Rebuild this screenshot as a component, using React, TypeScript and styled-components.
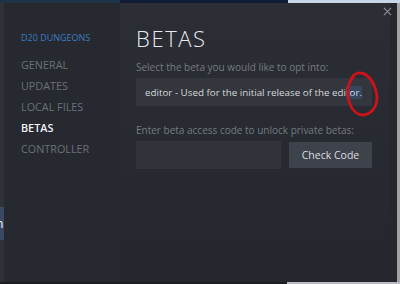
import styled, { createGlobalStyle } from 'styled-components';

const GlobalStyle = createGlobalStyle`
  html, body {
    margin: 0;
    padding: 0;
    width: 400px;
    height: 284px;
    overflow: hidden;
    background: #3a3e47;
  }
  * { box-sizing: border-box; }
`;

const navItems = ['GENERAL', 'UPDATES', 'LOCAL FILES', 'BETAS', 'CONTROLLER'];

export default function App() {
  return (
    <>
      <GlobalStyle />
      <Screen>
        <EdgeStrip $height={3}>
          <StripPart $color="#1d3547" $width={120} />
          <StripPart $color="#0f1c33" $width={168} />
          <StripPart $color="#c9d6ea" $width={112} />
        </EdgeStrip>
        <Body>
          <BehindEdge>
            <BehindButton>n</BehindButton>
          </BehindEdge>
          <Dialog>
            <Sidebar>
              <GameTitle>D20 DUNGEONS</GameTitle>
              <NavList>
                {navItems.map((item) => (
                  <NavItem key={item} $active={item === 'BETAS'}>
                    {item}
                  </NavItem>
                ))}
              </NavList>
            </Sidebar>
            <Main>
              <CloseButton>
                <svg width="9" height="9" viewBox="0 0 10 10">
                  <path d="M1 1L9 9M9 1L1 9" stroke="#8a8e96" strokeWidth="1.3" />
                </svg>
              </CloseButton>
              <Title>BETAS</Title>
              <Label $top={8}>Select the beta you would like to opt into:</Label>
              <SelectBox>
                <SelectText>
                  editor - Used for the initial release of the edi<Selected>tor.</Selected>
                </SelectText>
                {/* red hand-drawn circle from the screenshot */}
                <Scribble width="40" height="50" viewBox="0 0 40 50">
                  <path
                    d="M8 13 C10 6 15 3 19 4 C27 5 34 16 35 28 C35 38 30 45 21 46 C13 46 8 38 6 28 C5 20 7 12 12 7"
                    fill="none"
                    stroke="#cc121b"
                    strokeWidth="2.8"
                    strokeLinecap="round"
                  />
                </Scribble>
              </SelectBox>
              <Label $top={17}>Enter beta access code to unlock private betas:</Label>
              <CodeRow>
                <CodeInput />
                <CheckButton>Check Code</CheckButton>
              </CodeRow>
            </Main>
            <ScrollGutter />
            <RightEdge />
          </Dialog>
        </Body>
        <EdgeStrip $height={2}>
          <StripPart $color="#1b1d21" $width={287} />
          <StripPart $color="#b8bcc2" $width={113} />
        </EdgeStrip>
      </Screen>
    </>
  );
}

const Screen = styled.div`
  width: 400px;
  height: 284px;
  display: flex;
  flex-direction: column;
  font-family: "Open Sans", "Noto Sans", sans-serif;
`;

const EdgeStrip = styled.div<{ $height: number }>`
  height: ${({ $height }) => $height}px;
  flex-shrink: 0;
  display: flex;
`;

const StripPart = styled.div<{ $color: string; $width: number }>`
  width: ${({ $width }) => $width}px;
  flex-shrink: 0;
  background: ${({ $color }) => $color};
`;

const Body = styled.div`
  flex: 1;
  display: flex;
  min-height: 0;
`;

const BehindEdge = styled.div`
  width: 4px;
  flex-shrink: 0;
  background: #2e3138;
  padding-top: 204px;
  overflow: hidden;
`;

const BehindButton = styled.div`
  height: 33px;
  width: 4px;
  background: #3b4863;
  color: #ffffff;
  font-size: 12px;
  line-height: 33px;
  text-indent: -4px;
  overflow: hidden;
`;

const Dialog = styled.div`
  flex: 1;
  min-width: 0;
  display: flex;
  background: linear-gradient(180deg, #2b2e35 0%, #272a31 50%, #24272e 100%);
`;

const Sidebar = styled.div`
  width: 116px;
  flex-shrink: 0;
  background: #26292f;
  padding: 28px 0 0 17px;
`;

const GameTitle = styled.div`
  color: #3f7cc0;
  font-size: 9px;
  line-height: 13px;
  margin-bottom: 13px;
`;

const NavList = styled.div`
  display: flex;
  flex-direction: column;
  gap: 6px;
`;

const NavItem = styled.div<{ $active: boolean }>`
  font-size: 10.8px;
  line-height: 15px;
  color: ${({ $active }) => ($active ? '#f0f2f4' : '#6c7079')};
  font-weight: ${({ $active }) => ($active ? 600 : 400)};
`;

const Main = styled.div`
  flex: 1;
  min-width: 0;
  position: relative;
  padding: 21px 18px 0 16px;
  display: flex;
  flex-direction: column;
`;

const CloseButton = styled.div`
  position: absolute;
  top: 4px;
  right: -2px;
  display: flex;
`;

const Title = styled.div`
  color: #e8eaec;
  font-size: 22px;
  font-weight: 300;
  letter-spacing: 1.6px;
  line-height: 28px;
`;

const Label = styled.div<{ $top: number }>`
  color: #767a82;
  font-size: 10px;
  line-height: 14px;
  margin-top: ${({ $top }) => $top}px;
`;

const SelectBox = styled.div`
  position: relative;
  margin-top: 4px;
  height: 28px;
  background: #33363d;
  display: flex;
  align-items: center;
  padding-left: 9px;
`;

const SelectText = styled.span`
  color: #d6d8da;
  font-size: 9.8px;
  white-space: nowrap;
`;

const Selected = styled.span`
  color: #c4dcf0;
  background: rgba(60, 110, 170, 0.3);
`;

const Scribble = styled.svg`
  position: absolute;
  left: 206px;
  top: -9px;
`;

const CodeRow = styled.div`
  margin-top: 4px;
  display: flex;
  align-items: center;
  gap: 8px;
`;

const CodeInput = styled.div`
  width: 145px;
  height: 28px;
  background: #30333a;
`;

const CheckButton = styled.div`
  flex: 1;
  height: 26px;
  background: #3d424b;
  color: #dcdee0;
  font-size: 10.5px;
  display: flex;
  align-items: center;
  justify-content: center;
`;

const ScrollGutter = styled.div`
  width: 7px;
  flex-shrink: 0;
  background: #25272c;
`;

const RightEdge = styled.div`
  width: 3px;
  flex-shrink: 0;
  background: #a0a2a6;
`;
